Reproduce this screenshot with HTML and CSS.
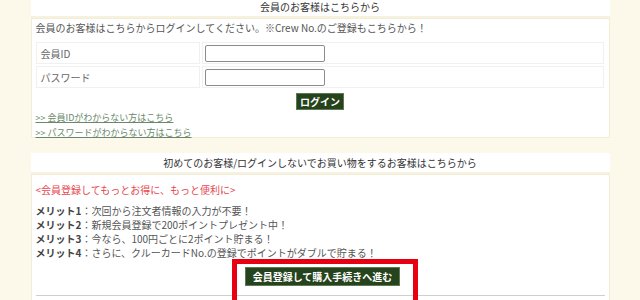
FILE: index.html
```html
<!DOCTYPE html>
<html lang="ja">
<head>
    <meta charset="UTF-8">
    <title>ログイン</title>
    <link rel="stylesheet" href="styles.css">
</head>
<body>
    <div class="wrap">
        <div class="sec-title sec-title-top">会員のお客様はこちらから</div>
        <div class="sec-box login-box">
            <p class="lead">会員のお客様はこちらからログインしてください。※Crew No.のご登録もこちらから！</p>
            <div class="login-table">
                <div class="cell label">会員ID</div>
                <div class="cell"><input type="text" class="field"></div>
                <div class="cell label">パスワード</div>
                <div class="cell"><input type="password" class="field"></div>
            </div>
            <div class="btn-row">
                <button class="btn-green btn-login">ログイン</button>
            </div>
            <ul class="help-links">
                <li><a href="#">&gt;&gt; 会員IDがわからない方はこちら</a></li>
                <li><a href="#">&gt;&gt; パスワードがわからない方はこちら</a></li>
            </ul>
        </div>

        <div class="sec-title">初めてのお客様/ログインしないでお買い物をするお客様はこちらから</div>
        <div class="sec-box guest-box">
            <p class="catch">&lt;会員登録してもっとお得に、もっと便利に&gt;</p>
            <ul class="merits">
                <li><b>メリット1</b>：次回から注文者情報の入力が不要！</li>
                <li><b>メリット2</b>：新規会員登録で200ポイントプレゼント中！</li>
                <li><b>メリット3</b>：今なら、100円ごとに2ポイント貯まる！</li>
                <li><b>メリット4</b>：さらに、クルーカードNo.の登録でポイントがダブルで貯まる！</li>
            </ul>
            <div class="btn-row entry-row">
                <span class="entry-wrap">
                    <button class="btn-green btn-entry">会員登録して購入手続きへ進む</button>
                </span>
            </div>
            <div class="next-block"></div>
        </div>
    </div>
</body>
</html>
```

FILE: styles.css
```css
body {
    margin: 0;
    background-color: #fdf9ea; /* cream page */
    font-family: 'Noto Sans CJK JP', 'Liberation Sans', sans-serif;
    font-size: 10px;
    color: #555;
}
.wrap {
    width: 579px;
    margin: 0 auto;
    overflow: hidden;
    height: 300px;
}
.sec-title {
    background-color: #fff;
    text-align: center;
    color: #333;
    font-size: 10px;
    line-height: 19px;
    height: 19px;
    border-bottom: 2px solid #f7f2de;
}
.sec-title-top {
    padding-top: 1px;
    line-height: 11px;
    height: 15px;
}
.sec-box {
    background-color: #fff;
    border: 1px solid #f2edd9;
}
.login-box {
    height: 118px;
    margin-bottom: 15px;
}
.lead {
    margin: 0;
    padding: 2px 4px 0;
    line-height: 13px;
}
.login-table {
    display: grid;
    grid-template-columns: 164px 1fr;
    gap: 2px;
    margin: 8px 5px 0 4px;
}
.login-table .cell {
    border: 1px solid #f0f0f0;
    height: 20px;
    display: flex;
    align-items: center;
    padding-left: 2px;
}
.login-table .label {
    padding-left: 4px;
    color: #666;
}
.field {
    width: 120px;
    height: 17px;
    box-sizing: border-box;
    border: 1px solid #8c8c8c;
    border-radius: 2px;
    margin: 0;
    padding: 0 2px;
}
.btn-row {
    text-align: center;
}
.btn-green {
    background-color: #25431c;
    color: #fff;
    font-family: inherit;
    font-weight: bold;
    border: 1px solid #5d7852;
    margin: 0;
    cursor: pointer;
}
.btn-login {
    margin-top: 5px;
    width: 48px;
    height: 17px;
    font-size: 10px;
    padding: 0;
    line-height: 14px;
}
.help-links {
    list-style: none;
    margin: 0;
    padding: 0 4px;
    font-size: 9px;
    line-height: 15px;
}
.help-links a {
    color: #6a876a;
}
.guest-box {
    height: 200px;
}
.catch {
    margin: 0;
    padding: 8px 4px 0;
    line-height: 14px;
    color: #e8474f;
}
.merits {
    list-style: none;
    margin: 7px 0 0;
    padding: 0 4px;
    line-height: 14px;
}
.merits b {
    color: #444;
}
.entry-row {
    margin-top: 7px;
    padding-left: 5px;
}
.entry-wrap {
    position: relative;
    display: inline-block;
}
/* red highlight laid over the button */
.entry-wrap::after {
    content: "";
    position: absolute;
    left: -13px;
    right: -18px;
    top: -8px;
    bottom: -25px;
    border: 5px solid #e60012;
}
.btn-entry {
    display: block;
    width: 155px;
    height: 19px;
    font-size: 10px;
    padding: 0;
    line-height: 16px;
}
.next-block {
    margin: 9px 4px 0 4px;
    border-top: 1px solid #cfcfcf;
    height: 20px;
}
```
